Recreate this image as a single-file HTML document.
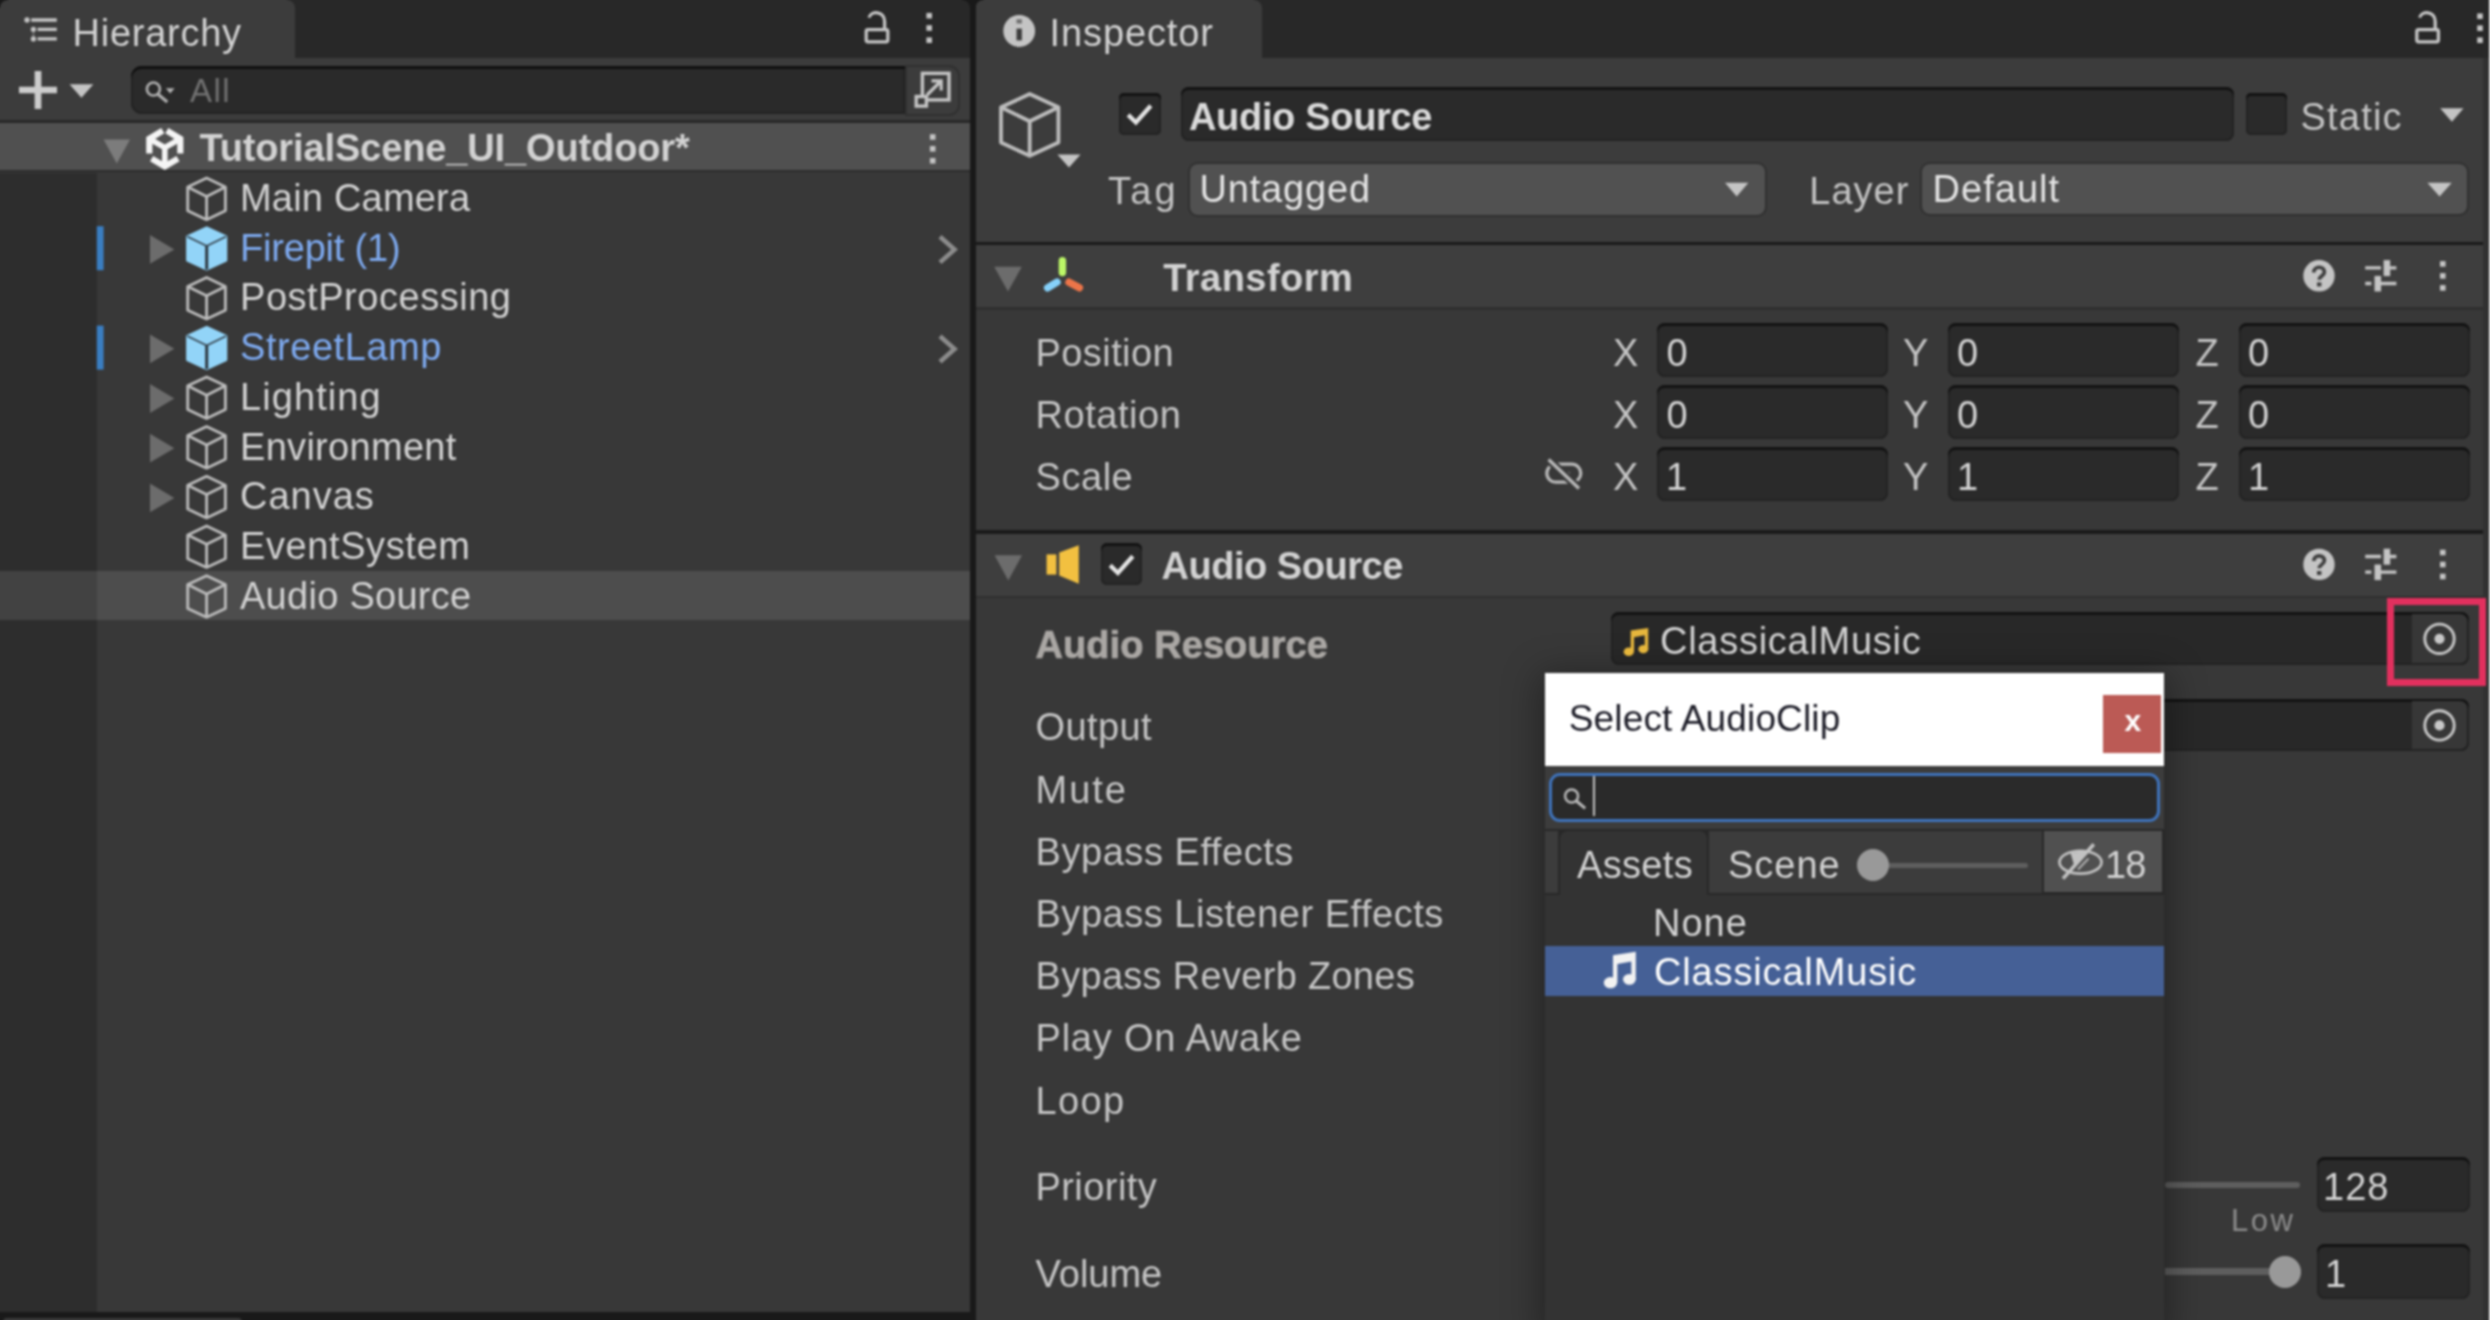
<!DOCTYPE html>
<html lang="en"><head><meta charset="utf-8"><title>Unity Editor - Select AudioClip</title>
<style>
html,body{margin:0;padding:0;background:#383838;}
body{width:2490px;height:1320px;overflow:hidden;font-family:"Liberation Sans",sans-serif;}
#root{position:relative;width:2490px;height:1320px;overflow:hidden;background:#383838;}
#blur{left:-30px;top:-30px;width:2550px;height:1380px;filter:blur(0.9px);}
#inner{left:30px;top:30px;width:2490px;height:1320px;}
#root div,#root span,#root svg{position:absolute;}
.t{white-space:nowrap;line-height:1;}
.fld{background:#2a2a2a;border-radius:8px;box-shadow:inset 0 3px 0 #131313,inset 0 0 0 2px #232323;}
.dd{background:#515151;border-radius:8px;box-shadow:0 0 0 2px #303030;}
</style></head><body>
<div id="root"><div id="blur"><div id="inner">
<div style="left:-30px;top:-30px;width:2550px;height:1380px;background:#383838;"></div>
<div style="left:-30px;top:-30px;width:1000px;height:88px;background:#282828;"></div>
<div style="left:-30px;top:-30px;width:325px;height:88px;background:#3c3c3c;"></div>
<div style="left:-30px;top:58px;width:1000px;height:62.4px;background:#3c3c3c;"></div>
<div style="left:-30px;top:120.4px;width:1000px;height:3.0px;background:#282828;"></div>
<div style="left:-30px;top:123.4px;width:1000px;height:46.2px;background:#505050;"></div>
<div style="left:-30px;top:169.6px;width:1000px;height:2.9px;background:#2c2c2c;"></div>
<div style="left:-30px;top:172.5px;width:126.5px;height:1139.5px;background:#2d2d2d;"></div>
<div style="left:96.5px;top:172.5px;width:873.5px;height:1139.5px;background:#383838;"></div>
<div style="left:-30px;top:570.6px;width:126.5px;height:49.0px;background:#424242;"></div>
<div style="left:96.5px;top:570.6px;width:873.5px;height:49.0px;background:#4d4d4d;"></div>
<div style="left:-30px;top:1312px;width:1005px;height:38px;background:#191919;"></div>
<div style="left:3px;top:1317.5px;width:239px;height:4.5px;background:#3a3a3a;border-radius:4px 4px 0 0;"></div>
<div style="left:970px;top:-30px;width:5.5px;height:1380px;background:#191919;"></div>
<div class="fld" style="left:131px;top:65.5px;width:774px;height:48.5px;border-radius:11px 0 0 11px;box-shadow:inset 0 3px 0 #101010,inset 0 0 0 2px #232323;"></div>
<div style="left:907px;top:66.5px;width:51px;height:47px;border-radius:0 9px 9px 0;background:#3c3c3c;box-shadow:0 0 0 2px #303030;"></div>
<div style="left:975.5px;top:-30px;width:1544.5px;height:88px;background:#282828;"></div>
<div style="left:975.5px;top:-30px;width:286.5px;height:88px;background:#3c3c3c;"></div>
<div style="left:975.5px;top:58px;width:1544.5px;height:184px;background:#3c3c3c;"></div>
<div style="left:975.5px;top:242px;width:1544.5px;height:3px;background:#1a1a1a;"></div>
<div style="left:975.5px;top:245px;width:1544.5px;height:62px;background:#3e3e3e;"></div>
<div style="left:975.5px;top:307px;width:1544.5px;height:2.5px;background:#2f2f2f;"></div>
<div style="left:975.5px;top:309.5px;width:1544.5px;height:220.5px;background:#383838;"></div>
<div style="left:975.5px;top:530px;width:1544.5px;height:4px;background:#1a1a1a;"></div>
<div style="left:975.5px;top:534px;width:1544.5px;height:61.5px;background:#3e3e3e;"></div>
<div style="left:975.5px;top:595.5px;width:1544.5px;height:2.5px;background:#2f2f2f;"></div>
<div style="left:975.5px;top:598px;width:1544.5px;height:752px;background:#383838;"></div>
<div style="left:2483.4px;top:58px;width:36.6px;height:1292px;background:#313131;"></div>
<div style="left:2488.8px;top:-30px;width:31.2px;height:1380px;background:#e6e6e6;"></div>
<div class="fld" style="left:1118.6px;top:92.6px;width:42.4px;height:42.6px;border-radius:5px;"></div>
<div class="fld" style="left:1180.7px;top:87.3px;width:1053.8px;height:53.7px;"></div>
<div class="fld" style="left:2245.5px;top:92.8px;width:41.5px;height:42.6px;border-radius:5px;"></div>
<div class="dd" style="left:1189.5px;top:164px;width:575.5px;height:50.8px;"></div>
<div class="dd" style="left:1922px;top:163.6px;width:545px;height:50.9px;"></div>
<div class="fld" style="left:1657.2px;top:323.0px;width:230.6px;height:54px;"></div>
<div class="fld" style="left:1948.3px;top:323.0px;width:230.6px;height:54px;"></div>
<div class="fld" style="left:2239.3px;top:323.0px;width:230.6px;height:54px;"></div>
<div class="fld" style="left:1657.2px;top:385.2px;width:230.6px;height:54px;"></div>
<div class="fld" style="left:1948.3px;top:385.2px;width:230.6px;height:54px;"></div>
<div class="fld" style="left:2239.3px;top:385.2px;width:230.6px;height:54px;"></div>
<div class="fld" style="left:1657.2px;top:447.4px;width:230.6px;height:54px;"></div>
<div class="fld" style="left:1948.3px;top:447.4px;width:230.6px;height:54px;"></div>
<div class="fld" style="left:2239.3px;top:447.4px;width:230.6px;height:54px;"></div>
<div class="fld" style="left:1101px;top:543.4px;width:41px;height:41.4px;border-radius:6px;"></div>
<div class="fld" style="left:1611px;top:612.3px;width:858px;height:52.6px;background:#282828;"></div>
<div style="left:2411.6px;top:614.3px;width:55.6px;height:48.6px;background:#373737;border-radius:0 7px 7px 0;"></div>
<div class="fld" style="left:1611px;top:698.6px;width:858px;height:52.6px;background:#282828;"></div>
<div style="left:2411.6px;top:700.6px;width:55.6px;height:48.6px;background:#373737;border-radius:0 7px 7px 0;"></div>
<div style="left:2165px;top:1181.6px;width:134.7px;height:6.4px;background:#5e5e5e;border-radius:3px;"></div>
<div class="fld" style="left:2316.6px;top:1157px;width:153.4px;height:54.8px;"></div>
<div style="left:2165px;top:1268.4px;width:125px;height:6.4px;background:#5e5e5e;"></div>
<div style="left:2269px;top:1255.6px;width:32px;height:32px;border-radius:50%;background:#999999;"></div>
<div class="fld" style="left:2316.6px;top:1244.3px;width:153.4px;height:54.8px;"></div>
<div style="left:2387px;top:598px;width:85.3px;height:73.6px;border:7px solid #e2305e;"></div>
<div style="left:1545px;top:673px;width:619.2px;height:660px;background:#333333;box-shadow:0 6px 34px 5px rgba(0,0,0,.36);"></div>
<div style="left:1545px;top:673px;width:619.2px;height:92.6px;background:#ffffff;"></div>
<div style="left:2102.8px;top:695px;width:58.2px;height:58px;background:#bb5a55;"></div>
<div style="left:1545px;top:765.6px;width:619.2px;height:63.4px;background:#3c3c3c;"></div>
<div style="left:1548.6px;top:772.6px;width:605.4px;height:43.3px;border:3px solid #3f73bb;border-radius:11px;background:#2a2a2a;"></div>
<div style="left:1592.5px;top:776px;width:2.1px;height:40px;background:#c4c4c4;"></div>
<div style="left:1545px;top:829px;width:619.2px;height:66px;background:#282828;"></div>
<div style="left:1545px;top:831px;width:12.5px;height:62px;background:#3c3c3c;"></div>
<div style="left:1559.5px;top:831px;width:147.5px;height:65px;background:#333333;border-radius:8px 8px 0 0;"></div>
<div style="left:1709px;top:831px;width:333px;height:62px;background:#3c3c3c;"></div>
<div style="left:2043.7px;top:830.8px;width:117.9px;height:61.6px;background:#505050;"></div>
<div style="left:1880px;top:863px;width:148px;height:5px;background:#5e5e5e;border-radius:3px;"></div>
<div style="left:1857px;top:849.3px;width:32px;height:32px;border-radius:50%;background:#999999;"></div>
<div style="left:1545px;top:946px;width:619.2px;height:49.8px;background:#456096;"></div>
<svg width="2550" height="1380" viewBox="-30 -30 2550 1380" style="left:-30px;top:-30px" shape-rendering="geometricPrecision"><path d="M-30 -30H8V0A8 8 0 0 0 0 8H-30Z" fill="#191919"/><path d="M295 -30H287V0A8 8 0 0 1 295 8Z" fill="#282828"/><path d="M970 -30H962V0A8 8 0 0 1 970 8Z" fill="#191919"/><path d="M975.5 -30H983.5V0A8 8 0 0 0 975.5 8H975.5Z" fill="#191919"/><path d="M1262 -30H1254V0A8 8 0 0 1 1262 8Z" fill="#282828"/><path d="M31.2 20H56.8M37.5 29.3H56.8M37.5 38.9H56.8" stroke="#c4c4c4" stroke-width="3.3" fill="none"/><circle cx="27" cy="20" r="2.7" fill="#c4c4c4"/><circle cx="33.4" cy="29.3" r="2.6" fill="#c4c4c4"/><circle cx="33.4" cy="38.9" r="2.6" fill="#c4c4c4"/><path d="M33.4 31V37.4" stroke="#c4c4c4" stroke-width="1.6" opacity=".45"/><rect x="866.2" y="29.6" width="21.6" height="12.2" rx="1.8" fill="none" stroke="#c4c4c4" stroke-width="3.3"/><path d="M869 17.6 C871 10.6 884.6 10.6 884.6 21.5 V29" fill="none" stroke="#c4c4c4" stroke-width="3.3"/><rect x="926.4" y="12.9" width="5.6" height="5.6" fill="#c4c4c4"/><rect x="926.4" y="25.2" width="5.6" height="5.6" fill="#c4c4c4"/><rect x="926.4" y="37.4" width="5.6" height="5.6" fill="#c4c4c4"/><path d="M38 71V109M19 90H57" stroke="#cccccc" stroke-width="6.7" fill="none"/><polygon points="69.5,84.3 93.4,84.3 81.45,97.8" fill="#c4c4c4"/><circle cx="153.4" cy="89" r="6.5" fill="none" stroke="#aeaeae" stroke-width="2.7"/><path d="M158 94.2L167.3 102" stroke="#aeaeae" stroke-width="3.2"/><polygon points="165.8,88.2 174.6,88.2 170.2,93.6" fill="#b4b4b4"/><rect x="922.4" y="73.3" width="26.6" height="26.6" fill="none" stroke="#c4c4c4" stroke-width="3.4"/><rect x="916.2" y="96.5" width="10.2" height="9.6" fill="#3c3c3c" stroke="#c4c4c4" stroke-width="3.4"/><path d="M927 95L940.5 81.5M931.5 80.8H941.2V90.5" fill="none" stroke="#c4c4c4" stroke-width="3.2"/><polygon points="103.6,139.5 130,139.5 116.8,163.5" fill="#7c7c7c"/><rect x="929.9" y="134.2" width="5.6" height="5.6" fill="#c4c4c4"/><rect x="929.9" y="146.0" width="5.6" height="5.6" fill="#c4c4c4"/><rect x="929.9" y="158.0" width="5.6" height="5.6" fill="#c4c4c4"/><g fill="none" stroke="#f4f4f4" stroke-width="6.2" stroke-linejoin="miter"><path d="M162.8 130.7L149.3 138.8V153.6"/><path d="M166.8 130.7L180.3 138.8V153.6"/><path d="M151.6 158.6L164.8 166.4L178 158.6"/><path d="M149.3 138.8L164.8 147.6L180.3 138.8M164.8 147.6V166.4" stroke-width="5.6"/></g><polygon points="206.6,178.1 225.4,187.0 225.4,210.8 206.6,219.7 187.7,210.8 187.7,187.0" fill="none" stroke="#bcbcbc" stroke-width="2.8" stroke-linejoin="round"/><path d="M187.7 187.0L206.6 196.4L225.4 187.0" fill="none" stroke="#bcbcbc" stroke-width="2.8" stroke-linejoin="round"/><path d="M206.6 196.4V219.7" fill="none" stroke="#bcbcbc" stroke-width="2.8"/><polygon points="206.7,227.6 226.2,236.6 226.2,260.6 206.7,269.6 187.2,260.6 187.2,236.6" fill="#92d4f8" stroke="#92d4f8" stroke-width="2.2" stroke-linejoin="round"/><path d="M187.2 236.6L206.7 246.1L226.2 236.6" fill="none" stroke="#35424c" stroke-width="1.7" stroke-linejoin="round"/><path d="M206.7 246.1V269.6" fill="none" stroke="#2c363e" stroke-width="3.0"/><rect x="96.8" y="226.2" width="6.8" height="44" fill="#3a7ec2"/><path d="M940 236.8L954.5 249.6L940 262.4" fill="none" stroke="#8c8c8c" stroke-width="4.6"/><polygon points="150,235.0 174.4,249.4 150,263.8" fill="#6c6c6c"/><polygon points="206.6,277.5 225.4,286.4 225.4,310.2 206.6,319.1 187.7,310.2 187.7,286.4" fill="none" stroke="#bcbcbc" stroke-width="2.8" stroke-linejoin="round"/><path d="M187.7 286.4L206.6 295.8L225.4 286.4" fill="none" stroke="#bcbcbc" stroke-width="2.8" stroke-linejoin="round"/><path d="M206.6 295.8V319.1" fill="none" stroke="#bcbcbc" stroke-width="2.8"/><polygon points="206.7,327.0 226.2,336.0 226.2,360.0 206.7,369.0 187.2,360.0 187.2,336.0" fill="#92d4f8" stroke="#92d4f8" stroke-width="2.2" stroke-linejoin="round"/><path d="M187.2 336.0L206.7 345.5L226.2 336.0" fill="none" stroke="#35424c" stroke-width="1.7" stroke-linejoin="round"/><path d="M206.7 345.5V369.0" fill="none" stroke="#2c363e" stroke-width="3.0"/><rect x="96.8" y="325.6" width="6.8" height="44" fill="#3a7ec2"/><path d="M940 336.2L954.5 349.0L940 361.8" fill="none" stroke="#8c8c8c" stroke-width="4.6"/><polygon points="150,334.40000000000003 174.4,348.80000000000007 150,363.20000000000005" fill="#6c6c6c"/><polygon points="206.6,376.9 225.4,385.8 225.4,409.6 206.6,418.5 187.7,409.6 187.7,385.8" fill="none" stroke="#bcbcbc" stroke-width="2.8" stroke-linejoin="round"/><path d="M187.7 385.8L206.6 395.2L225.4 385.8" fill="none" stroke="#bcbcbc" stroke-width="2.8" stroke-linejoin="round"/><path d="M206.6 395.2V418.5" fill="none" stroke="#bcbcbc" stroke-width="2.8"/><polygon points="150,384.1 174.4,398.5 150,412.90000000000003" fill="#6c6c6c"/><polygon points="206.6,426.6 225.4,435.5 225.4,459.3 206.6,468.2 187.7,459.3 187.7,435.5" fill="none" stroke="#bcbcbc" stroke-width="2.8" stroke-linejoin="round"/><path d="M187.7 435.5L206.6 444.9L225.4 435.5" fill="none" stroke="#bcbcbc" stroke-width="2.8" stroke-linejoin="round"/><path d="M206.6 444.9V468.2" fill="none" stroke="#bcbcbc" stroke-width="2.8"/><polygon points="150,433.8 174.4,448.20000000000005 150,462.6" fill="#6c6c6c"/><polygon points="206.6,476.3 225.4,485.2 225.4,509.0 206.6,517.9 187.7,509.0 187.7,485.2" fill="none" stroke="#bcbcbc" stroke-width="2.8" stroke-linejoin="round"/><path d="M187.7 485.2L206.6 494.6L225.4 485.2" fill="none" stroke="#bcbcbc" stroke-width="2.8" stroke-linejoin="round"/><path d="M206.6 494.6V517.9" fill="none" stroke="#bcbcbc" stroke-width="2.8"/><polygon points="150,483.50000000000006 174.4,497.9000000000001 150,512.3000000000001" fill="#6c6c6c"/><polygon points="206.6,526.0 225.4,534.9 225.4,558.7 206.6,567.6 187.7,558.7 187.7,534.9" fill="none" stroke="#bcbcbc" stroke-width="2.8" stroke-linejoin="round"/><path d="M187.7 534.9L206.6 544.3L225.4 534.9" fill="none" stroke="#bcbcbc" stroke-width="2.8" stroke-linejoin="round"/><path d="M206.6 544.3V567.6" fill="none" stroke="#bcbcbc" stroke-width="2.8"/><polygon points="206.6,575.7 225.4,584.6 225.4,608.4 206.6,617.3 187.7,608.4 187.7,584.6" fill="none" stroke="#bcbcbc" stroke-width="2.8" stroke-linejoin="round"/><path d="M187.7 584.6L206.6 594.0L225.4 584.6" fill="none" stroke="#bcbcbc" stroke-width="2.8" stroke-linejoin="round"/><path d="M206.6 594.0V617.3" fill="none" stroke="#bcbcbc" stroke-width="2.8"/><circle cx="1019.2" cy="31" r="15.9" fill="#c4c4c4"/><rect x="1016.5" y="19.3" width="5.4" height="4.2" fill="#707070"/><rect x="1016.5" y="28.6" width="5.4" height="11.8" fill="#3c3c3c"/><rect x="2416.7999999999997" y="29.6" width="21.6" height="12.2" rx="1.8" fill="none" stroke="#c4c4c4" stroke-width="3.3"/><path d="M2419.6 17.6 C2421.6 10.6 2435.2 10.6 2435.2 21.5 V29" fill="none" stroke="#c4c4c4" stroke-width="3.3"/><rect x="2477.2" y="13.4" width="5.6" height="5.6" fill="#c4c4c4"/><rect x="2477.2" y="25.4" width="5.6" height="5.6" fill="#c4c4c4"/><rect x="2477.2" y="37.4" width="5.6" height="5.6" fill="#c4c4c4"/><polygon points="1029.7,94.0 1058.4,107.3 1058.4,142.5 1029.7,155.8 1001.0,142.5 1001.0,107.3" fill="none" stroke="#bcbcbc" stroke-width="3.8" stroke-linejoin="round"/><path d="M1001.0 107.3L1029.7 121.2L1058.4 107.3" fill="none" stroke="#bcbcbc" stroke-width="3.8" stroke-linejoin="round"/><path d="M1029.7 121.2V155.8" fill="none" stroke="#bcbcbc" stroke-width="3.8"/><polygon points="1057.4,154.4 1080.6,154.4 1069.0,167.6" fill="#c4c4c4"/><path d="M1128.1999999999998 114.9 L1135.8999999999999 122.5 L1150.8 105.7" fill="none" stroke="#e4e4e4" stroke-width="4.3"/><polygon points="2440.2,108.3 2463.6,108.3 2451.8999999999996,121.8" fill="#c4c4c4"/><polygon points="1725,182.8 1748.4,182.8 1736.7,196.4" fill="#c4c4c4"/><polygon points="2427.4,182.8 2451.8,182.8 2439.6000000000004,196.4" fill="#c4c4c4"/><polygon points="994.2,266.8 1021.8,266.8 1008.0,291.6" fill="#6c6c6c"/><path d="M1062.4 260.8V272.6" stroke="#bcf767" stroke-width="7.4" stroke-linecap="round"/><path d="M1057 282.2L1047.6 287.9" stroke="#86d1fa" stroke-width="7.4" stroke-linecap="round"/><path d="M1069 282.2L1079.4 287.8" stroke="#ec7549" stroke-width="7.4" stroke-linecap="round"/><circle cx="2319" cy="275.8" r="15.7" fill="#c4c4c4"/><path d="M2313.8 272.40000000000003 C2313.8 265.6 2324.4 265.6 2324.4 272.0 C2324.4 276.0 2319.2 276.0 2319.2 279.7" fill="none" stroke="#3e3e3e" stroke-width="3.7"/><rect x="2317" y="282.40000000000003" width="4.4" height="4" fill="#3e3e3e"/><path d="M2365.2 267.90000000000003H2381M2390 267.90000000000003H2396.4M2365.2 283.5H2371.4M2381 283.5H2396.4" stroke="#c4c4c4" stroke-width="3.3" fill="none"/><rect x="2383.6" y="260.1" width="6.6" height="16" fill="#c4c4c4"/><rect x="2374.5" y="275.90000000000003" width="6.6" height="15.6" fill="#c4c4c4"/><rect x="2440.0" y="261.1" width="5.6" height="5.6" fill="#c4c4c4"/><rect x="2440.0" y="273.1" width="5.6" height="5.6" fill="#c4c4c4"/><rect x="2440.0" y="285.1" width="5.6" height="5.6" fill="#c4c4c4"/><circle cx="2319" cy="564.4" r="15.7" fill="#c4c4c4"/><path d="M2313.8 561.0 C2313.8 554.1999999999999 2324.4 554.1999999999999 2324.4 560.6 C2324.4 564.6 2319.2 564.6 2319.2 568.3" fill="none" stroke="#3e3e3e" stroke-width="3.7"/><rect x="2317" y="571.0" width="4.4" height="4" fill="#3e3e3e"/><path d="M2365.2 556.5H2381M2390 556.5H2396.4M2365.2 572.1H2371.4M2381 572.1H2396.4" stroke="#c4c4c4" stroke-width="3.3" fill="none"/><rect x="2383.6" y="548.6999999999999" width="6.6" height="16" fill="#c4c4c4"/><rect x="2374.5" y="564.5" width="6.6" height="15.6" fill="#c4c4c4"/><rect x="2440.0" y="549.7" width="5.6" height="5.6" fill="#c4c4c4"/><rect x="2440.0" y="561.7" width="5.6" height="5.6" fill="#c4c4c4"/><rect x="2440.0" y="573.7" width="5.6" height="5.6" fill="#c4c4c4"/><g fill="none" stroke="#b8b8b8" stroke-width="3.2"><rect x="1546.8" y="464.2" width="34" height="18" rx="9"/><path d="M1558 473H1570" stroke-width="2.4" opacity=".45"/><path d="M1549.5 460.5L1578 487.5" stroke="#383838" stroke-width="8.5"/><path d="M1548.6 459.4L1579 488.6" stroke-width="3.4"/></g><polygon points="994.6,555.2 1022,555.2 1008.3,580.6" fill="#6c6c6c"/><rect x="1046.6" y="554.4" width="9.8" height="20.2" fill="#f2c040"/><polygon points="1059.2,552.6 1078.8,545.2 1078.8,583.8 1059.2,575.4" fill="#f2c040"/><path d="M1110.1999999999998 565.4000000000001 L1117.8999999999999 573.0 L1132.8 556.2" fill="none" stroke="#e4e4e4" stroke-width="4.3"/><g transform="translate(1623.6,626.9) scale(0.985)" fill="#e6b63c"><ellipse cx="5.2" cy="25.2" rx="5.2" ry="4.4"/><ellipse cx="20" cy="22.6" rx="5" ry="4.2"/><path d="M7.2 3.7L25 1V23H21.5V8.6L10.6 10.6V25.4H7.2Z"/></g><g transform="translate(1603.8,950.4) scale(1.28)" fill="#f2f2f2"><ellipse cx="5.2" cy="25.2" rx="5.2" ry="4.4"/><ellipse cx="20" cy="22.6" rx="5" ry="4.2"/><path d="M7.2 3.7L25 1V23H21.5V8.6L10.6 10.6V25.4H7.2Z"/></g><circle cx="2439.5" cy="638.8" r="14.7" fill="none" stroke="#c8c8c8" stroke-width="2.9"/><circle cx="2439.5" cy="638.8" r="5.1" fill="#c8c8c8"/><circle cx="2439.5" cy="725.4" r="14.7" fill="none" stroke="#c8c8c8" stroke-width="2.9"/><circle cx="2439.5" cy="725.4" r="5.1" fill="#c8c8c8"/><circle cx="1571.6" cy="796" r="6.5" fill="none" stroke="#b8b8b8" stroke-width="2.5"/><path d="M1576.4 801L1585.2 808.4" stroke="#b8b8b8" stroke-width="3"/><g fill="none" stroke="#c2c2c2" stroke-width="2.7"><ellipse cx="2080.5" cy="862.2" rx="21" ry="11.4"/><polygon points="2070.5,853 2089.5,850.6 2074.5,866.5" fill="#c2c2c2" stroke="none"/><path d="M2078 869.5L2088.5 858.5" stroke-width="2.2" opacity=".8"/><path d="M2063 878.6L2093.8 844.2" stroke-width="3.6"/></g></svg>
<span class="t" id="t0" style="left:72.60px;top:14.23px;font-size:38px;color:#d2d2d2;letter-spacing:0.725px;">Hierarchy</span>
<span class="t" id="t1" style="left:190.00px;top:73.57px;font-size:33px;color:#727272;letter-spacing:1.500px;">All</span>
<span class="t" id="t2" style="left:199.40px;top:129.43px;font-size:38px;color:#d2d2d2;font-weight:700;letter-spacing:-0.125px;">TutorialScene_UI_Outdoor*</span>
<span class="t" id="t3" style="left:240.00px;top:179.03px;font-size:38px;color:#d2d2d2;letter-spacing:0.200px;">Main Camera</span>
<span class="t" id="t4" style="left:240.00px;top:228.73px;font-size:38px;color:#7eaaf0;letter-spacing:-0.200px;">Firepit (1)</span>
<span class="t" id="t5" style="left:240.00px;top:278.43px;font-size:38px;color:#d2d2d2;letter-spacing:0.538px;">PostProcessing</span>
<span class="t" id="t6" style="left:240.00px;top:328.13px;font-size:38px;color:#7eaaf0;letter-spacing:0.556px;">StreetLamp</span>
<span class="t" id="t7" style="left:240.00px;top:377.83px;font-size:38px;color:#d2d2d2;letter-spacing:1.071px;">Lighting</span>
<span class="t" id="t8" style="left:240.00px;top:427.53px;font-size:38px;color:#d2d2d2;letter-spacing:0.300px;">Environment</span>
<span class="t" id="t9" style="left:240.00px;top:477.23px;font-size:38px;color:#d2d2d2;letter-spacing:1.000px;">Canvas</span>
<span class="t" id="t10" style="left:240.00px;top:526.93px;font-size:38px;color:#d2d2d2;letter-spacing:0.600px;">EventSystem</span>
<span class="t" id="t11" style="left:240.00px;top:576.63px;font-size:38px;color:#d2d2d2;letter-spacing:0.273px;">Audio Source</span>
<span class="t" id="t12" style="left:1049.60px;top:14.23px;font-size:38px;color:#d2d2d2;letter-spacing:0.875px;">Inspector</span>
<span class="t" id="t13" style="left:1189.00px;top:97.83px;font-size:38px;color:#dadada;font-weight:700;letter-spacing:-0.327px;">Audio Source</span>
<span class="t" id="t14" style="left:2300.50px;top:97.83px;font-size:38px;color:#c4c4c4;letter-spacing:1.200px;">Static</span>
<span class="t" id="t15" style="left:1107.90px;top:172.33px;font-size:38px;color:#c4c4c4;letter-spacing:3.250px;">Tag</span>
<span class="t" id="t16" style="left:1199.40px;top:170.43px;font-size:38px;color:#e4e4e4;letter-spacing:0.857px;">Untagged</span>
<span class="t" id="t17" style="left:1809.30px;top:172.43px;font-size:38px;color:#c4c4c4;letter-spacing:1.000px;">Layer</span>
<span class="t" id="t18" style="left:1932.60px;top:170.43px;font-size:38px;color:#e4e4e4;letter-spacing:1.017px;">Default</span>
<span class="t" id="t19" style="left:1163.20px;top:258.63px;font-size:38px;color:#d2d2d2;font-weight:700;letter-spacing:0.475px;">Transform</span>
<span class="t" id="t20" style="left:1035.50px;top:333.83px;font-size:38px;color:#c4c4c4;letter-spacing:0.429px;">Position</span>
<span class="t" id="t21" style="left:1613.00px;top:333.83px;font-size:38px;color:#c4c4c4;">X</span>
<span class="t" id="t22" style="left:1903.00px;top:333.83px;font-size:38px;color:#c4c4c4;">Y</span>
<span class="t" id="t23" style="left:2195.50px;top:333.83px;font-size:38px;color:#c4c4c4;">Z</span>
<span class="t" id="t24" style="left:1666.50px;top:333.83px;font-size:38px;color:#d2d2d2;">0</span>
<span class="t" id="t25" style="left:1957.00px;top:333.83px;font-size:38px;color:#d2d2d2;">0</span>
<span class="t" id="t26" style="left:2248.00px;top:333.83px;font-size:38px;color:#d2d2d2;">0</span>
<span class="t" id="t27" style="left:1035.50px;top:396.03px;font-size:38px;color:#c4c4c4;letter-spacing:0.543px;">Rotation</span>
<span class="t" id="t28" style="left:1613.00px;top:396.03px;font-size:38px;color:#c4c4c4;">X</span>
<span class="t" id="t29" style="left:1903.00px;top:396.03px;font-size:38px;color:#c4c4c4;">Y</span>
<span class="t" id="t30" style="left:2195.50px;top:396.03px;font-size:38px;color:#c4c4c4;">Z</span>
<span class="t" id="t31" style="left:1666.50px;top:396.03px;font-size:38px;color:#d2d2d2;">0</span>
<span class="t" id="t32" style="left:1957.00px;top:396.03px;font-size:38px;color:#d2d2d2;">0</span>
<span class="t" id="t33" style="left:2248.00px;top:396.03px;font-size:38px;color:#d2d2d2;">0</span>
<span class="t" id="t34" style="left:1035.50px;top:458.23px;font-size:38px;color:#c4c4c4;letter-spacing:0.550px;">Scale</span>
<span class="t" id="t35" style="left:1613.00px;top:458.23px;font-size:38px;color:#c4c4c4;">X</span>
<span class="t" id="t36" style="left:1903.00px;top:458.23px;font-size:38px;color:#c4c4c4;">Y</span>
<span class="t" id="t37" style="left:2195.50px;top:458.23px;font-size:38px;color:#c4c4c4;">Z</span>
<span class="t" id="t38" style="left:1666.00px;top:458.23px;font-size:38px;color:#d2d2d2;">1</span>
<span class="t" id="t39" style="left:1957.00px;top:458.23px;font-size:38px;color:#d2d2d2;">1</span>
<span class="t" id="t40" style="left:2248.00px;top:458.23px;font-size:38px;color:#d2d2d2;">1</span>
<span class="t" id="t41" style="left:1161.40px;top:547.43px;font-size:38px;color:#d2d2d2;font-weight:700;letter-spacing:-0.455px;">Audio Source</span>
<span class="t" id="t42" style="left:1035.50px;top:625.83px;font-size:38px;color:#aaa7a4;-webkit-text-stroke:0.7px currentColor;font-weight:700;letter-spacing:0.077px;">Audio Resource</span>
<span class="t" id="t43" style="left:1035.50px;top:708.33px;font-size:38px;color:#c4c4c4;letter-spacing:0.400px;">Output</span>
<span class="t" id="t44" style="left:1035.50px;top:770.53px;font-size:38px;color:#c4c4c4;letter-spacing:2.000px;">Mute</span>
<span class="t" id="t45" style="left:1035.50px;top:832.73px;font-size:38px;color:#c4c4c4;letter-spacing:0.554px;">Bypass Effects</span>
<span class="t" id="t46" style="left:1035.50px;top:894.93px;font-size:38px;color:#c4c4c4;letter-spacing:0.518px;">Bypass Listener Effects</span>
<span class="t" id="t47" style="left:1035.50px;top:957.13px;font-size:38px;color:#c4c4c4;letter-spacing:0.300px;">Bypass Reverb Zones</span>
<span class="t" id="t48" style="left:1035.50px;top:1019.33px;font-size:38px;color:#c4c4c4;letter-spacing:0.783px;">Play On Awake</span>
<span class="t" id="t49" style="left:1035.50px;top:1081.53px;font-size:38px;color:#c4c4c4;letter-spacing:1.333px;">Loop</span>
<span class="t" id="t50" style="left:1035.50px;top:1167.83px;font-size:38px;color:#c4c4c4;letter-spacing:0.429px;">Priority</span>
<span class="t" id="t51" style="left:1035.50px;top:1254.53px;font-size:38px;color:#c4c4c4;">Volume</span>
<span class="t" id="t52" style="left:1660.00px;top:622.33px;font-size:38px;color:#d2d2d2;letter-spacing:0.723px;">ClassicalMusic</span>
<span class="t" id="t53" style="left:2323.00px;top:1168.23px;font-size:38px;color:#d2d2d2;letter-spacing:1.000px;">128</span>
<span class="t" id="t54" style="left:2325.00px;top:1255.23px;font-size:38px;color:#d2d2d2;">1</span>
<span class="t" id="t55" style="left:2231.00px;top:1204.76px;font-size:31px;color:#8c8c8c;letter-spacing:2.500px;">Low</span>
<span class="t" id="t56" style="left:1568.80px;top:700.08px;font-size:37px;color:#1d1d28;letter-spacing:0.133px;">Select AudioClip</span>
<span class="t" id="t57" style="left:2124.50px;top:706.21px;font-size:30px;color:#ffffff;font-weight:700;">x</span>
<span class="t" id="t58" style="left:1577.00px;top:845.83px;font-size:38px;color:#d2d2d2;letter-spacing:0.320px;">Assets</span>
<span class="t" id="t59" style="left:1728.00px;top:845.83px;font-size:38px;color:#d2d2d2;letter-spacing:1.000px;">Scene</span>
<span class="t" id="t60" style="left:2105.00px;top:845.83px;font-size:38px;color:#d2d2d2;letter-spacing:-1.000px;">18</span>
<span class="t" id="t61" style="left:1653.00px;top:903.83px;font-size:38px;color:#d2d2d2;letter-spacing:1.000px;">None</span>
<span class="t" id="t62" style="left:1654.00px;top:953.23px;font-size:38px;color:#ffffff;letter-spacing:0.846px;">ClassicalMusic</span>
</div></div></div>
</body></html>
